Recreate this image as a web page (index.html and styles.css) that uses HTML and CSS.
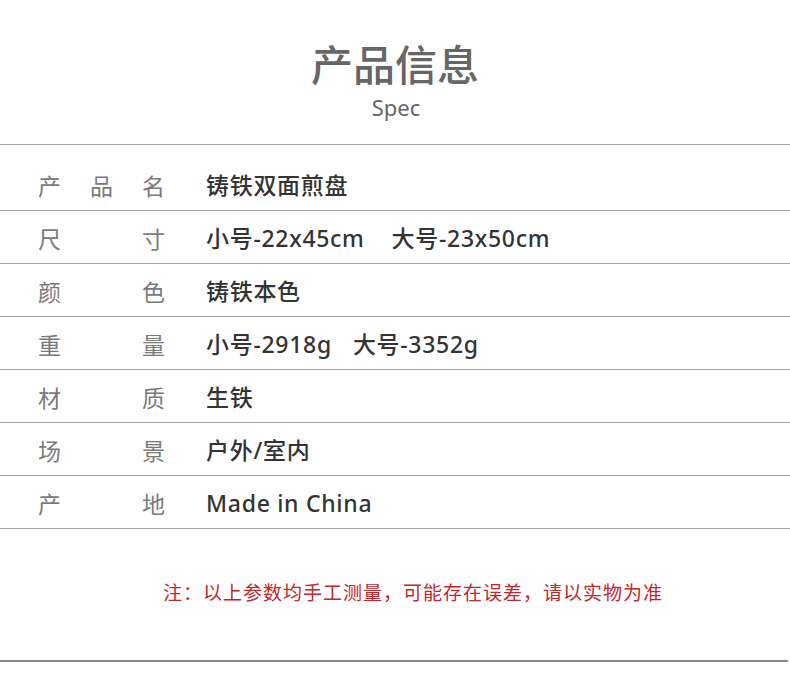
FILE: index.html
```html
<!DOCTYPE html>
<html lang="zh-CN">
<head>
<meta charset="utf-8">
<link rel="stylesheet" href="styles.css">
</head>
<body>
<div class="page">
  <header class="head">
    <h1 class="title">产品信息</h1>
    <div class="sub">Spec</div>
  </header>
  <div class="table">
    <div class="row first"><span class="label">产品名</span><span class="value">铸铁双面煎盘</span></div>
    <div class="row"><span class="label">尺寸</span><span class="value">小号-22x45cm<span class="gap4"></span>大号-23x50cm</span></div>
    <div class="row"><span class="label">颜色</span><span class="value">铸铁本色</span></div>
    <div class="row"><span class="label">重量</span><span class="value">小号-2918g<span class="gap3"></span>大号-3352g</span></div>
    <div class="row"><span class="label">材质</span><span class="value">生铁</span></div>
    <div class="row"><span class="label">场景</span><span class="value">户外/室内</span></div>
    <div class="row"><span class="label">产地</span><span class="value">Made in China</span></div>
  </div>
  <p class="note">注：以上参数均手工测量，可能存在误差，请以实物为准</p>
  <div class="bottom-line"></div>
</div>
</body>
</html>
```
FILE: styles.css
```css
* { box-sizing: border-box; }
html, body { margin: 0; padding: 0; background: #fff; }
body { font-family: "Noto Sans CJK SC", "Noto Sans", sans-serif; }
.page { width: 790px; height: 689px; overflow: hidden; }
.head { display: flex; flex-direction: column; align-items: center; padding-top: 35px; height: 144px; }
.title { margin: 0; font-size: 42px; line-height: 56px; font-weight: 500; color: #666; }
.sub { font-family: "Noto Sans", sans-serif; font-size: 22px; line-height: 28px; color: #666; margin-top: 2px; margin-left: 2px; }
.table { border-top: 1px solid #a0a0a0; }
.row { display: flex; align-items: center; height: 53px; border-bottom: 1px solid #a0a0a0; padding-top: 2px; }
.row.first { height: 66px; padding-top: 15px; }
.label { width: 127px; margin-left: 38px; color: #7a7a7a; font-size: 23px; text-align: justify; text-align-last: justify; line-height: 30px; }
.value { margin-left: 41px; color: #333; font-family: "Noto Sans", "Noto Sans CJK SC", sans-serif; font-size: 23px; letter-spacing: 0.7px; line-height: 30px; font-weight: 500; }
.gap4 { display: inline-block; width: 27px; }
.gap3 { display: inline-block; width: 21px; }
.note { margin: 50px 0 0; padding-left: 36px; text-align: center; color: #c0272d; font-size: 19px; letter-spacing: 1px; line-height: 26px; }
.bottom-line { margin-top: 55px; height: 2px; background: #8a8a8a; width: 788px; }
```
